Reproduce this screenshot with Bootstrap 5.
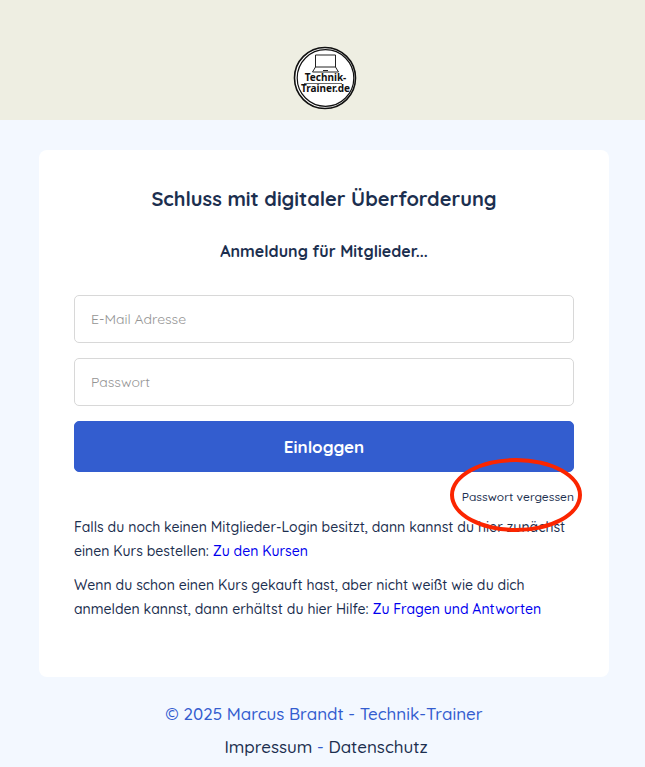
<!DOCTYPE html>
<html lang="de">
<head>
<meta charset="utf-8">
<meta name="viewport" content="width=device-width, initial-scale=1">
<title>Anmeldung – Technik-Trainer</title>
<link href="https://cdn.jsdelivr.net/npm/bootstrap@5.3.0/dist/css/bootstrap.min.css" rel="stylesheet">
<style>
  body { background: #f3f8ff; color: #1c2f4f; font: 500 14px/24px Quicksand, Lato, sans-serif; }
  .site-header { background: #eeeee2; padding: 46px 36px 10px 40px; }
  .page-gutter { padding-left: 39px; padding-right: 36px; }
  .login-main { padding-top: 30px; }
  .login-panel { max-width: 570px; padding: 35px 35px 56px; border-radius: 8px; }
  .panel-title { font-size: 20px; line-height: 28px; font-weight: 700; margin-bottom: 26px; }
  .panel-subtitle { font-size: 16px; line-height: 24px; font-weight: 700; margin-bottom: 32px; }
  .login-field { height: 48px; padding: 0 16px; border: 1px solid #d8d8d8; border-radius: 5px; font-size: 14px; margin-bottom: 15px; }
  .login-field::placeholder { color: #949494; font-weight: 400; }
  .login-button { --bs-btn-bg: #335dcf; --bs-btn-border-color: #335dcf; --bs-btn-hover-bg: #284fb8; --bs-btn-padding-y: 0; height: 51px; border-radius: 5px; font-size: 17px; font-weight: 700; }
  .forgot-row { padding-top: 12px; margin-bottom: 6px; }
  .forgot-link { font-size: 12px; }
  .marker { position: absolute; left: -12px; top: -26px; width: 132px; height: 74px; border: 4px solid #fb2500; border-radius: 50%; pointer-events: none; }
  .hint { margin-bottom: 10px; font-weight: 550; }
  .hint a { color: #0000ee; }
  .site-footer { color: #335dcf; font-size: 17px; line-height: 26px; font-weight: 550; padding-top: 24px; }
  .site-footer p { margin-bottom: 7px; }
  .site-footer a { color: #1c2f4f; }
  a { color: inherit; }
</style>
<script src="https://cdn.jsdelivr.net/npm/bootstrap@5.3.0/dist/js/bootstrap.bundle.min.js" defer></script>
</head>
<body>
<header class="site-header d-flex justify-content-center">
  <a href="#" class="d-block lh-1" aria-label="Technik-Trainer.de">
    <svg class="d-block" width="64" height="64" viewBox="0 0 64 64" fill="none">
      <circle cx="32" cy="32" r="30" fill="#fff"/>
      <circle cx="32" cy="32" r="30.5" stroke="#111" stroke-width="1.6"/>
      <circle cx="32.5" cy="32" r="28.3" stroke="#111" stroke-width="1.2"/>
      <path d="M22.500 9h20v12H22.500zM22.500 21l-3 5h26l-3-5M30 24.500h5" stroke="#222" stroke-width="1"/>
      <path d="M11 37.500h38" stroke="#444" stroke-width=".8"/>
      <g fill="#111" font-family="Noto Sans, sans-serif" font-weight="700" font-size="10" text-anchor="middle">
        <text x="32.500" y="35">Technik-</text>
        <text x="32.500" y="46">Trainer.de</text>
      </g>
    </svg>
  </a>
</header>
<main class="page-gutter login-main">
  <section class="login-panel bg-white mx-auto">
    <h1 class="panel-title text-center">Schluss mit digitaler Überforderung</h1>
    <h2 class="panel-subtitle text-center">Anmeldung für Mitglieder...</h2>
    <form>
      <input type="email" class="form-control login-field" placeholder="E-Mail Adresse" aria-label="E-Mail Adresse">
      <input type="password" class="form-control login-field" placeholder="Passwort" aria-label="Passwort">
      <button type="submit" class="btn btn-primary login-button w-100">Einloggen</button>
    </form>
    <div class="forgot-row d-flex justify-content-end">
      <div class="position-relative">
        <a href="#" class="forgot-link text-decoration-none">Passwort vergessen</a>
        <span class="marker"></span>
      </div>
    </div>
    <p class="hint">Falls du noch keinen Mitglieder-Login besitzt, dann kannst du hier zunächst einen Kurs bestellen: <a href="#" class="text-decoration-none">Zu den Kursen</a></p>
    <p class="hint mb-0">Wenn du schon einen Kurs gekauft hast, aber nicht weißt wie du dich anmelden kannst, dann erhältst du hier Hilfe: <a href="#" class="text-decoration-none">Zu Fragen und Antworten</a></p>
  </section>
</main>
<footer class="site-footer page-gutter text-center">
  <p>© 2025 Marcus Brandt - Technik-Trainer</p>
  <nav class="ps-1"><a href="#" class="text-decoration-none">Impressum</a> - <a href="#" class="text-decoration-none">Datenschutz</a></nav>
</footer>
</body>
</html>
